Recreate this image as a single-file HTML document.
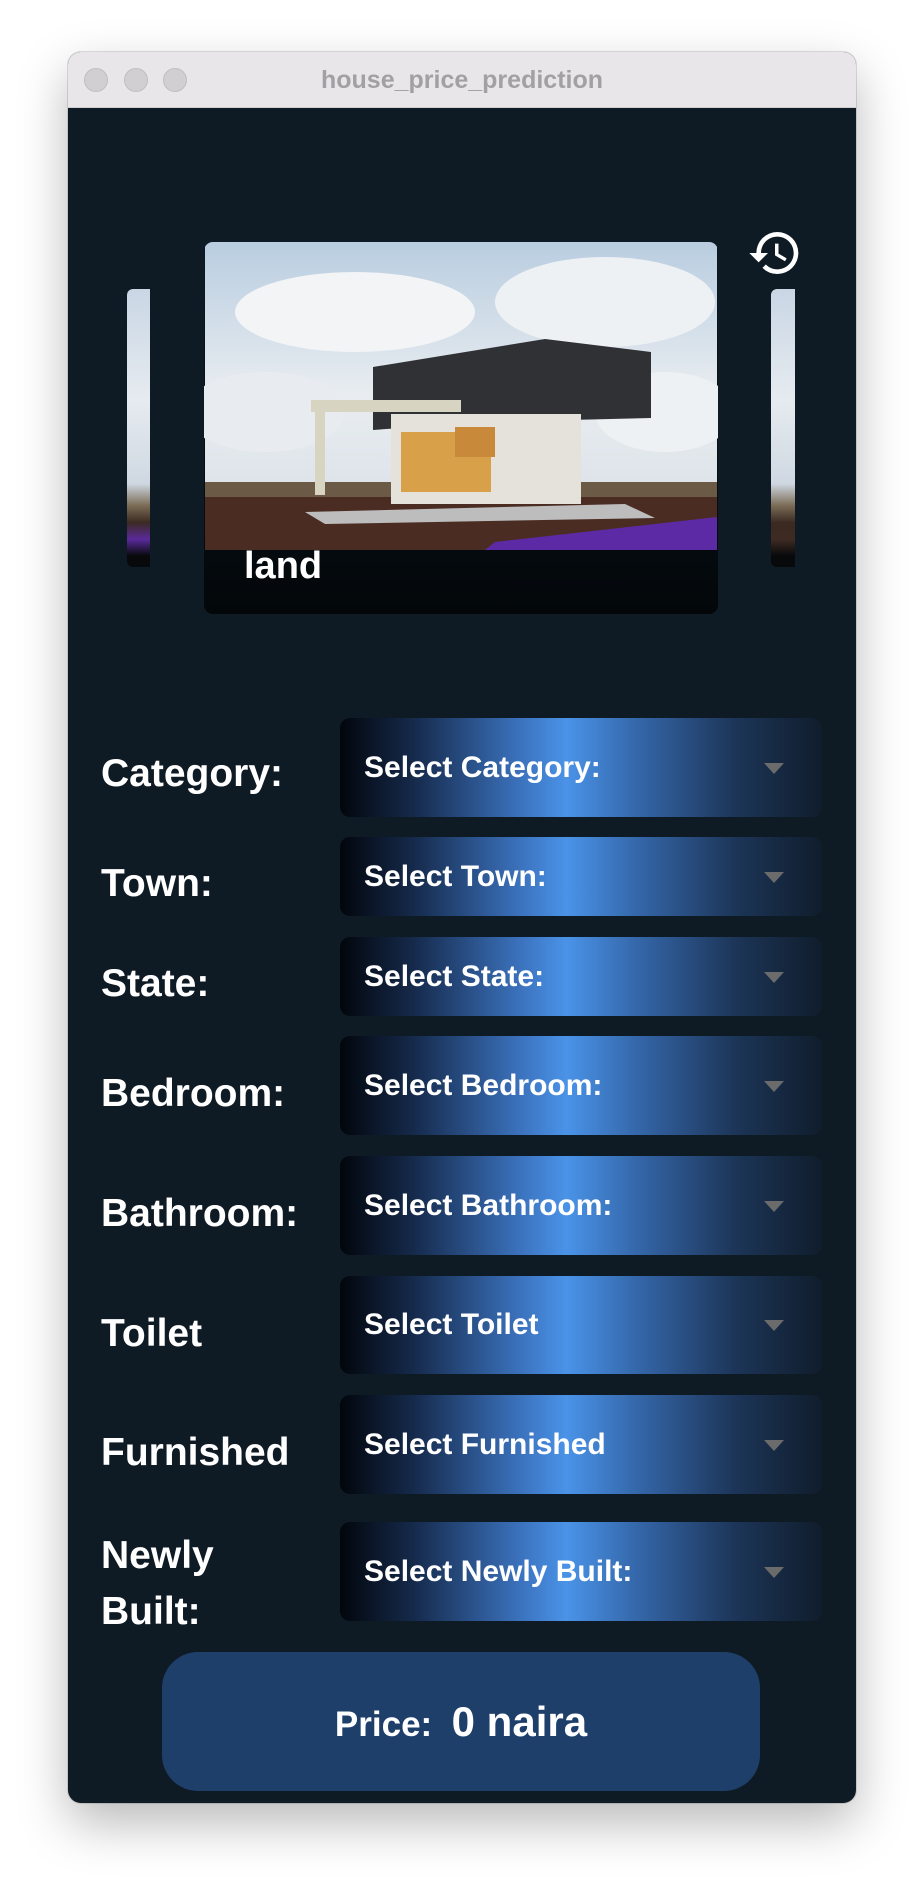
<!DOCTYPE html>
<html><head><meta charset="utf-8"><style>
*{margin:0;padding:0;box-sizing:border-box}
body{width:924px;height:1888px;background:#fff;position:relative;overflow:hidden;font-family:"Liberation Sans",sans-serif}
.win{position:absolute;left:68px;top:52px;width:788px;height:1751px;border-radius:13px;background:#0f1b24;overflow:hidden;box-shadow:0 20px 50px rgba(0,0,0,.28),0 0 0 1px rgba(0,0,0,.12)}
.tb{position:absolute;left:0;top:0;width:100%;height:56px;background:#e8e6e9;border-bottom:1px solid #cfcfcf}
.dot{position:absolute;top:16px;width:24px;height:24px;border-radius:50%;background:#d1cfd2;border:1px solid #c0bec1}
.tt{position:absolute;left:0;width:100%;top:14px;text-align:center;font-weight:bold;font-size:25px;color:#a2a0a3}
.c{position:absolute;left:0;top:2px;width:100%;height:100%}
.abs{position:absolute}
.lbl{position:absolute;left:33px;color:#fff;font-weight:bold;font-size:39px}
.dd{position:absolute;left:272px;width:482px;border-radius:10px;background:linear-gradient(90deg,#02060c 0%,#15294a 15%,#3c74c0 38%,#4a93e8 47%,#3466a8 62%,#1c3558 82%,#101d2c 100%)}
.dd span{position:absolute;left:24px;top:50%;transform:translateY(-50%);color:#fff;font-weight:bold;font-size:30px;white-space:nowrap}
.dd i{position:absolute;left:424px;top:50%;margin-top:-5px;width:0;height:0;border-left:10px solid transparent;border-right:10px solid transparent;border-top:11px solid #6b6b6b}
</style></head><body>
<div class="win">
 <div class="tb">
  <div class="dot" style="left:16px"></div><div class="dot" style="left:56px"></div><div class="dot" style="left:95px"></div>
  <div class="tt">house_price_prediction</div>
 </div>
 <div class="c">
 <div class="abs" style="left:59px;top:235px;width:23px;height:278px;border-radius:6px 0 0 6px;overflow:hidden;background:linear-gradient(#c9d6e4 0%,#e6ebf0 40%,#cfd8e2 70%,#7a6b55 78%,#3b2a22 84%,#5a2a9a 90%,#07090b 96%)"></div>
 <div class="abs" style="left:703px;top:235px;width:24px;height:278px;border-radius:6px 0 0 6px;overflow:hidden;background:linear-gradient(#c9d6e4 0%,#e6ebf0 40%,#cfd8e2 70%,#7a6b55 78%,#3b2a22 84%,#3e2a22 90%,#07090b 96%)"></div>
 <div class="abs" style="left:136px;top:188px;width:514px;height:372px;border-radius:9px;overflow:hidden;background:linear-gradient(#0c1820,#03070a)">
  <svg width="514" height="308" viewBox="0 0 512 308" style="position:absolute;left:0;top:0">
   <defs><linearGradient id="sky" x1="0" y1="0" x2="0" y2="1"><stop offset="0" stop-color="#b9cde0"/><stop offset=".5" stop-color="#e9edf1"/><stop offset="1" stop-color="#d6dde5"/></linearGradient></defs>
   <rect width="512" height="308" fill="url(#sky)"/>
   <ellipse cx="150" cy="70" rx="120" ry="40" fill="#f2f4f6"/>
   <ellipse cx="400" cy="60" rx="110" ry="45" fill="#eef1f4"/>
   <ellipse cx="60" cy="170" rx="80" ry="40" fill="#e8ecf0"/>
   <ellipse cx="460" cy="170" rx="70" ry="40" fill="#eef1f4"/>
   <rect y="240" width="512" height="20" fill="#6b5a45"/>
   <rect y="255" width="512" height="53" fill="#4a2c22"/>
   <polygon points="290,300 512,275 512,308 280,308" fill="#5d2aa6"/>
   <polygon points="100,270 420,262 450,276 120,282" fill="#bdbdbd"/>
   <polygon points="168,125 340,97 446,110 446,176 280,180 168,188" fill="#2f3134"/>
   <rect x="106" y="158" width="150" height="12" fill="#d8d4c2"/>
   <rect x="110" y="168" width="10" height="85" fill="#d8d4c2"/>
   <rect x="186" y="172" width="190" height="90" fill="#e4e2da"/>
   <rect x="196" y="190" width="90" height="60" fill="#d9a04a"/>
   <rect x="250" y="185" width="40" height="30" fill="#c88a3a"/>
  </svg>
  <div class="abs" style="left:40px;top:303px;color:#fff;font-weight:bold;font-size:38px">land</div>
 </div>
 <svg class="abs" style="left:679px;top:171px" width="56" height="56" viewBox="0 0 24 24"><path fill="#fff" d="M13 3a9 9 0 0 0-9 9H1l3.89 3.89.07.14L9 12H6c0-3.87 3.13-7 7-7s7 3.13 7 7-3.13 7-7 7c-1.93 0-3.68-.79-4.94-2.06l-1.42 1.42A8.954 8.954 0 0 0 13 21a9 9 0 0 0 0-18zm-1 5v5l4.28 2.54.72-1.21-3.5-2.08V8H12z"/></svg>

 <div class="lbl" style="top:698px">Category:</div>
 <div class="dd" style="top:664px;height:99px"><span>Select Category:</span><i></i></div>
 <div class="lbl" style="top:808px">Town:</div>
 <div class="dd" style="top:783px;height:79px"><span>Select Town:</span><i></i></div>
 <div class="lbl" style="top:908px">State:</div>
 <div class="dd" style="top:883px;height:79px"><span>Select State:</span><i></i></div>
 <div class="lbl" style="top:1018px">Bedroom:</div>
 <div class="dd" style="top:982px;height:99px"><span>Select Bedroom:</span><i></i></div>
 <div class="lbl" style="top:1138px">Bathroom:</div>
 <div class="dd" style="top:1102px;height:99px"><span>Select Bathroom:</span><i></i></div>
 <div class="lbl" style="top:1258px">Toilet</div>
 <div class="dd" style="top:1222px;height:98px"><span>Select Toilet</span><i></i></div>
 <div class="lbl" style="top:1377px">Furnished</div>
 <div class="dd" style="top:1341px;height:99px"><span>Select Furnished</span><i></i></div>
 <div class="lbl" style="top:1474px;line-height:56px">Newly<br>Built:</div>
 <div class="dd" style="top:1468px;height:99px"><span>Select Newly Built:</span><i></i></div>

 <div class="abs" style="left:94px;top:1598px;width:598px;height:139px;border-radius:36px;background:#1f3f6b;color:#fff;font-weight:bold;text-align:center;line-height:139px;white-space:nowrap"><span style="font-size:35px">Price:&nbsp; </span><span style="font-size:42px">0 naira</span></div>
 </div>
</div>
</body></html>
